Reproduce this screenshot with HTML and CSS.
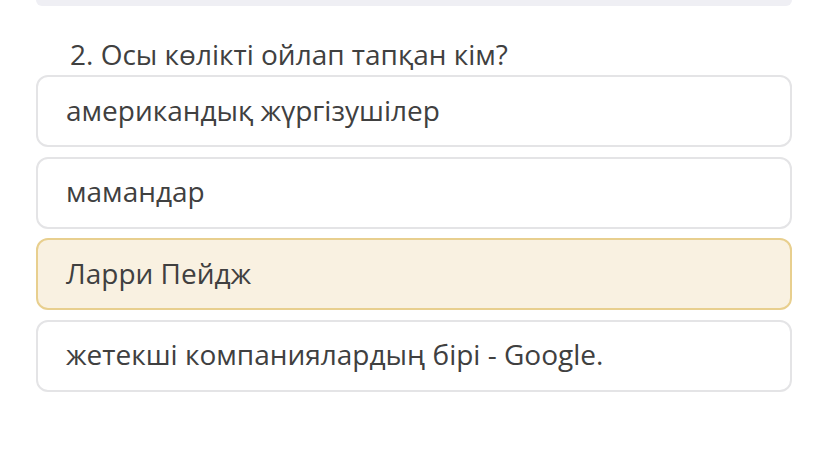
FILE: index.html
```html
<!DOCTYPE html>
<html>
<head>
    <title>Сұрақ 2</title>
    <link rel="stylesheet" href="styles.css">
</head>
<body>
    <div class="container">
        <div class="prev-card"></div>
        <div class="question">2. Осы көлікті ойлап тапқан кім?</div>
        <div class="options">
            <div class="option">американдық жүргізушілер</div>
            <div class="option">мамандар</div>
            <div class="option selected">Ларри Пейдж</div>
            <div class="option">жетекші компаниялардың бірі - Google.</div>
        </div>
    </div>
</body>
</html>
```

FILE: styles.css
```css
body {
    margin: 0;
    font-family: "Open Sans", "Noto Sans", sans-serif;
    background-color: #fff;
    color: #404040;
}

.container {
    width: 756px;
    margin-left: 36px;
}

.prev-card {
    height: 6px;
    background-color: #efeff4;
    border-radius: 0 0 10px 10px;
}

.question {
    font-size: 28px;
    line-height: 36px;
    padding: 30px 0 0 34px;
    height: 39px;
}

.options {
    display: flex;
    flex-direction: column;
    gap: 9.5px;
}

.option {
    box-sizing: border-box;
    height: 72px;
    display: flex;
    align-items: center;
    padding: 0 0 3px 28px;
    font-size: 28px;
    border: 2px solid #e4e4e6;
    border-radius: 12px;
    background-color: #fff;
}

.option.selected {
    background-color: #f9f1e1;
    border-color: #e8cf8e;
}
```
